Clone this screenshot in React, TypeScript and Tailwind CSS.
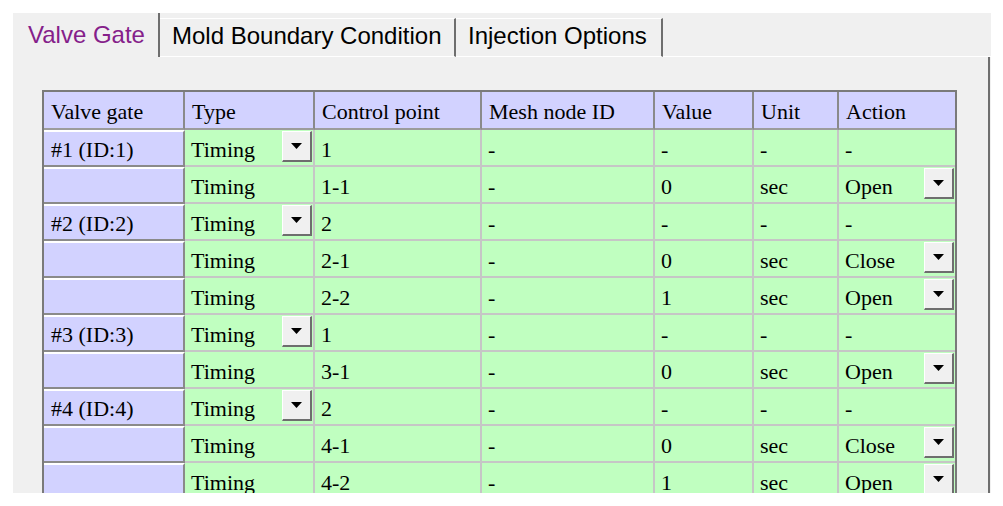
import React from 'react';

type Row = {
  gate: string;
  typeDrop: boolean;
  point: string;
  value: string;
  unit: string;
  action: string;
};

const rows: Row[] = [
  { gate: '#1 (ID:1)', typeDrop: true, point: '1', value: '-', unit: '-', action: '-' },
  { gate: '', typeDrop: false, point: '1-1', value: '0', unit: 'sec', action: 'Open' },
  { gate: '#2 (ID:2)', typeDrop: true, point: '2', value: '-', unit: '-', action: '-' },
  { gate: '', typeDrop: false, point: '2-1', value: '0', unit: 'sec', action: 'Close' },
  { gate: '', typeDrop: false, point: '2-2', value: '1', unit: 'sec', action: 'Open' },
  { gate: '#3 (ID:3)', typeDrop: true, point: '1', value: '-', unit: '-', action: '-' },
  { gate: '', typeDrop: false, point: '3-1', value: '0', unit: 'sec', action: 'Open' },
  { gate: '#4 (ID:4)', typeDrop: true, point: '2', value: '-', unit: '-', action: '-' },
  { gate: '', typeDrop: false, point: '4-1', value: '0', unit: 'sec', action: 'Close' },
  { gate: '', typeDrop: false, point: '4-2', value: '1', unit: 'sec', action: 'Open' },
];

const headers = ['Valve gate', 'Type', 'Control point', 'Mesh node ID', 'Value', 'Unit', 'Action'];

const DropButton = () => (
  <div className="absolute right-[1px] top-[1px] flex h-[31px] w-[30px] items-center justify-center border-t border-l border-t-white border-l-white border-r-2 border-b-2 border-r-[#6e6e6e] border-b-[#6e6e6e] bg-[#f0f0f0]">
    <svg width="11" height="6" viewBox="0 0 11 6">
      <polygon points="0,0 11,0 5.5,6" fill="#000" />
    </svg>
  </div>
);

const GreenCell = ({ children, last, drop }: { children: React.ReactNode; last?: boolean; drop?: boolean }) => (
  <div
    className={
      'relative flex h-[37px] items-center border-b-2 border-b-[#c6c6c6] bg-[#c0ffc0] pl-[6px] ' +
      (last ? '' : 'border-r-2 border-r-[#c6c6c6]')
    }
  >
    <span className="pt-[5px]">{children}</span>
    {drop && <DropButton />}
  </div>
);

export default function App() {
  return (
    <div className="min-h-screen bg-white pl-[13px] pt-[13px]">
      <div className="h-[480px] w-[978px] overflow-hidden bg-[#f0f0f0] font-['Liberation_Sans',Arial,sans-serif]">
        {/* tab strip */}
        <div className="flex h-[44px] text-[24px] leading-none">
          <div className="flex h-[44px] w-[147px] items-start border-r-2 border-r-[#6e6e6e] pl-[15px] pt-[10px] text-[#85208a]">
            Valve Gate
          </div>
          <div className="mt-[5px] flex h-[39px] w-[296px] items-start border-t border-t-white border-b border-b-white border-r-2 border-r-[#6e6e6e] pl-[12px] pt-[5px] text-black">
            Mold Boundary Condition
          </div>
          <div className="mt-[5px] flex h-[39px] w-[207px] items-start border-t border-t-white border-b border-b-white border-r-2 border-r-[#6e6e6e] pl-[12px] pt-[5px] text-black">
            Injection Options
          </div>
          <div className="h-[44px] flex-1 border-b border-b-white" />
        </div>

        {/* panel body */}
        <div className="h-[436px] w-[977px] border-r-2 border-r-[#6e6e6e] pl-[29px] pt-[33px]">
          <div className="w-[915px] border-2 border-b-0 border-[#7a7a7a] font-['Liberation_Serif','Times_New_Roman',serif] text-[22px] leading-none text-black">
            <div className="grid grid-cols-[141px_130px_167px_173px_99px_85px_116px]">
              {headers.map((h, i) => (
                <div
                  key={h}
                  className={
                    'flex h-[38px] items-center border-b-2 border-b-[#9c9c9c] bg-[#d2d2ff] pl-[7px] ' +
                    (i < headers.length - 1 ? 'border-r-2 border-r-[#8a8a8a]' : '')
                  }
                >
                  <span className="pt-[4px]">{h}</span>
                </div>
              ))}

              {rows.map((r, idx) => (
                <React.Fragment key={idx}>
                  <div className="flex h-[37px] items-center border-t-2 border-t-white border-b-2 border-b-[#8a8a8a] border-r-2 border-r-[#8a8a8a] bg-[#d2d2ff] pl-[7px]">
                    <span className="pt-[3px]">{r.gate}</span>
                  </div>
                  <GreenCell drop={r.typeDrop}>Timing</GreenCell>
                  <GreenCell>{r.point}</GreenCell>
                  <GreenCell>-</GreenCell>
                  <GreenCell>{r.value}</GreenCell>
                  <GreenCell>{r.unit}</GreenCell>
                  <GreenCell last drop={r.action !== '-'}>
                    {r.action}
                  </GreenCell>
                </React.Fragment>
              ))}
            </div>
          </div>
        </div>
      </div>
    </div>
  );
}
